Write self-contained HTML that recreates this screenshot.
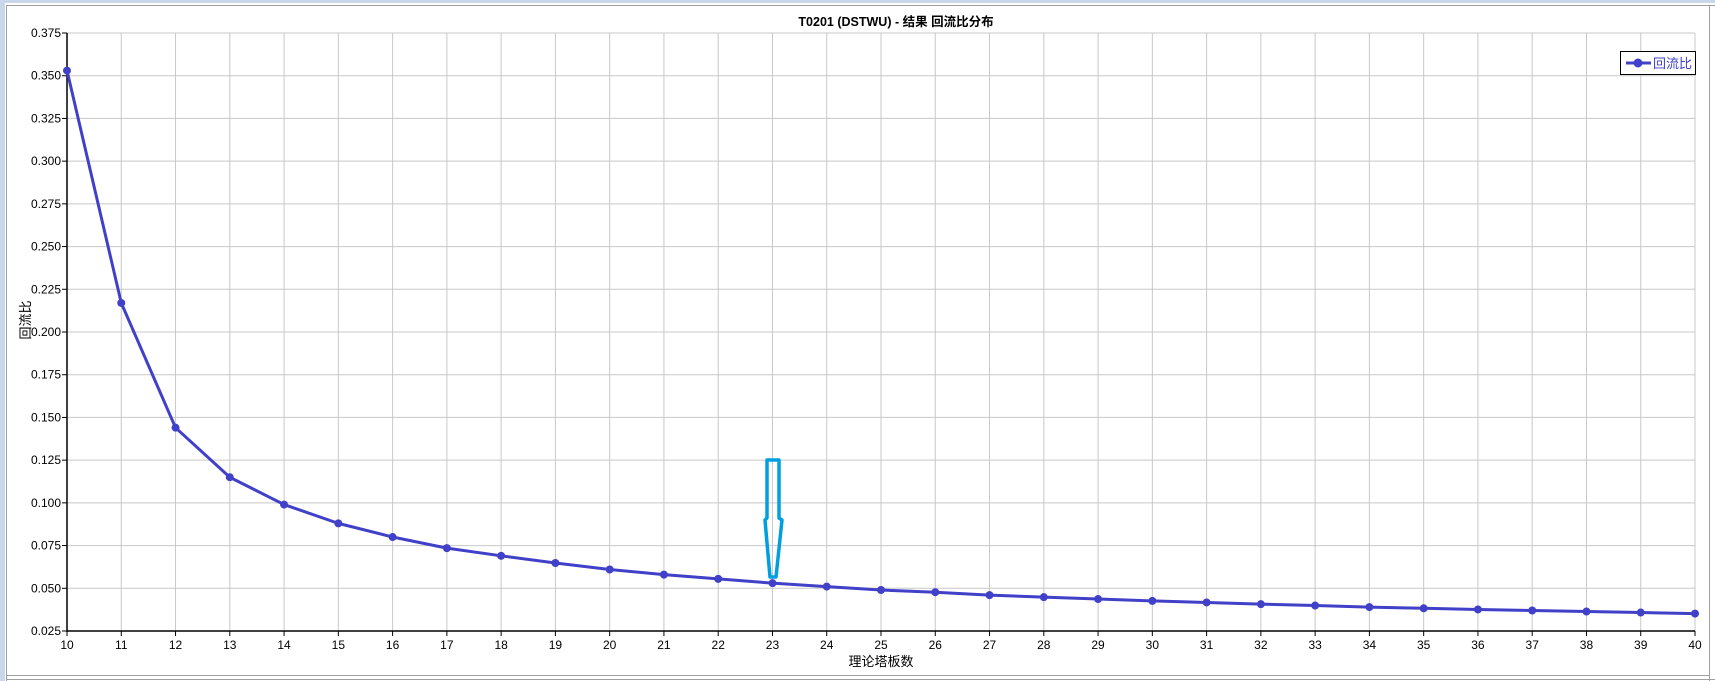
<!DOCTYPE html>
<html><head><meta charset="utf-8"><style>
html,body{margin:0;padding:0;background:#fff;width:1715px;height:681px;overflow:hidden}
svg{display:block;font-family:"Liberation Sans","Noto Sans CJK SC",sans-serif}
</style></head><body>
<svg id="s" width="1715" height="681" xmlns="http://www.w3.org/2000/svg">
<rect x="0" y="0" width="1715" height="681" fill="#fff"/>
<rect x="0" y="0" width="1715" height="3" fill="#c9d7ea"/>
<rect x="0" y="0" width="5" height="681" fill="#c9d7ea"/>
<line x1="6" y1="5.5" x2="1715" y2="5.5" stroke="#a0a0a0"/>
<line x1="6.5" y1="5" x2="6.5" y2="681" stroke="#a0a0a0"/>
<line x1="1709.5" y1="5" x2="1709.5" y2="681" stroke="#a0a0a0"/>
<line x1="6" y1="675.5" x2="1710" y2="675.5" stroke="#a0a0a0"/>
<line x1="6" y1="679.5" x2="1715" y2="679.5" stroke="#a0a0a0"/>
<text x="896" y="26" text-anchor="middle" font-size="12.5" font-weight="bold" fill="#000">T0201 (DSTWU) - 结果 回流比分布</text>
<g id="g"></g>
<g transform="translate(30,320) rotate(-90)"><text x="0" y="0" text-anchor="middle" font-size="13" fill="#000">回流比</text></g>
<text x="881" y="666" text-anchor="middle" font-size="13" fill="#000">理论塔板数</text>
<rect x="1620.5" y="51.5" width="75" height="23" fill="#fff" stroke="#000"/>
<line x1="1626" y1="63" x2="1651" y2="63" stroke="#4040c8" stroke-width="3"/>
<circle cx="1638" cy="63" r="4.5" fill="#4040c8"/>
<text x="1653" y="68" font-size="13" fill="#4040c8">回流比</text>
<path d="M767 460 L779 460 L779 518 L782 520 L776 577 L770 577 L765 520 L767 518 Z" fill="none" stroke="#00a0e0" stroke-width="3.5" stroke-linejoin="round"/>
</svg>
<script>
var L=67,R=1695,T=33,B=631,dx=(R-L)/30,dy=(B-T)/14;
var g=document.getElementById('g'),h='';
function X(n){return L+(n-10)*dx}function Y(v){return T+(0.375-v)/0.025*dy}
for(var i=0;i<=30;i++){var x=X(10+i);h+='<line x1="'+x+'" y1="'+T+'" x2="'+x+'" y2="'+B+'" stroke="#c8c8c8"/>';h+='<line x1="'+x+'" y1="'+B+'" x2="'+x+'" y2="'+(B+5)+'" stroke="#000"/>';h+='<text x="'+x+'" y="'+(B+18)+'" text-anchor="middle" font-size="12" fill="#000">'+(10+i)+'</text>';}
for(var j=0;j<=14;j++){var y=T+j*dy,v=(0.375-j*0.025).toFixed(3);h+='<line x1="'+L+'" y1="'+y+'" x2="'+R+'" y2="'+y+'" stroke="#c8c8c8"/>';h+='<line x1="'+(L-5)+'" y1="'+y+'" x2="'+L+'" y2="'+y+'" stroke="#000"/>';h+='<text x="'+(L-6)+'" y="'+(y+4)+'" text-anchor="end" font-size="12" fill="#000">'+v+'</text>';}
h+='<line x1="'+L+'" y1="'+T+'" x2="'+L+'" y2="'+(B+1)+'" stroke="#000" stroke-width="1.5"/>';
h+='<line x1="'+L+'" y1="'+B+'" x2="'+R+'" y2="'+B+'" stroke="#000" stroke-width="1.5"/>';
var d=[0.353,0.217,0.144,0.115,0.099,0.088,0.080,0.0735,0.069,0.0648,0.061,0.058,0.0555,0.053,0.051,0.049,0.0477,0.046,0.0448,0.0437,0.0426,0.0417,0.0407,0.0399,0.039,0.0383,0.0376,0.037,0.0364,0.0358,0.0352];
var p='';for(var k=0;k<d.length;k++){p+=(k?'L':'M')+X(10+k)+' '+Y(d[k]);}
h+='<path d="'+p+'" fill="none" stroke="#4040c8" stroke-width="3" stroke-linejoin="round"/>';
for(k=0;k<d.length;k++)h+='<circle cx="'+X(10+k)+'" cy="'+Y(d[k])+'" r="4" fill="#4040c8"/>';
g.innerHTML=h;
</script>
</body></html>
